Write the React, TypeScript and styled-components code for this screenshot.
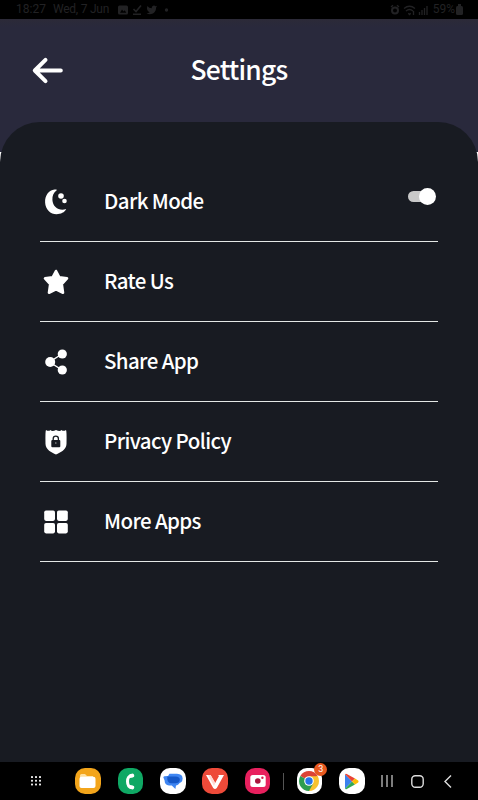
import React from "react";
import styled, { createGlobalStyle } from "styled-components";

const GlobalStyle = createGlobalStyle`
  * { box-sizing: border-box; }
  html, body { margin: 0; padding: 0; background: #fff; }
  svg { display: block; flex: none; overflow: visible; }
`;

const Screen = styled.div`
  width: 478px;
  height: 800px;
  overflow: hidden;
  display: flex;
  flex-direction: column;
  background: #fff;
  font-family: "Noto Sans CJK SC", "Noto Sans", sans-serif;
`;

const StatusBar = styled.div`
  height: 19px;
  flex: none;
  display: flex;
  align-items: center;
  justify-content: space-between;
  padding: 0 15px 0 16px;
  background: #000;
  color: #222224;
  font: 12px/19px Roboto, sans-serif;
`;

const StatusGroup = styled.div<{ $gap: number }>`
  display: flex;
  align-items: center;
  gap: ${(p) => p.$gap}px;
`;

const Clock = styled.span`
  width: 32px;
`;

const Day = styled.span`
  width: 59px;
  white-space: nowrap;
  letter-spacing: -0.25px;
`;

const Header = styled.header`
  height: 133px;
  flex: none;
  display: grid;
  grid-template-columns: 95px 1fr 95px;
  justify-items: center;
  padding-top: 29px;
  align-items: start;
  background: linear-gradient(#2c2a38, #29293c 8px);
`;

const BackButton = styled.button`
  border: 0;
  padding: 0;
  background: none;
  height: 44px;
  display: flex;
  align-items: center;
`;

const Title = styled.h1`
  margin: 0;
  color: #fff;
  font-size: 26.4px;
  line-height: 41px;
  font-weight: 500;
  letter-spacing: -0.75px;
`;

const Panel = styled.main`
  flex: 1;
  margin-top: -30px;
  padding: 40px 40px 0;
  border-radius: 40px 40px 0 0;
  background: #181b22;
`;

const Row = styled.div`
  height: 80px;
  display: flex;
  align-items: center;
  border-bottom: 1px solid #e4e8e6;
`;

const IconSlot = styled.div`
  width: 32px;
  display: flex;
  justify-content: center;
  margin: 0 32px 0 0;
`;

const Label = styled.span`
  flex: 1;
  padding-bottom: 4px;
  color: #fff;
  font-size: 20.5px;
  line-height: 30px;
  font-weight: 500;
  letter-spacing: -0.62px;
`;

const Track = styled.div`
  width: 25px;
  height: 11px;
  margin: 0 5.5px 10px 0;
  border-radius: 6px;
  background: #c9c9c9;
  display: flex;
  align-items: center;
  justify-content: flex-end;
`;

const Thumb = styled.div`
  width: 17px;
  height: 17px;
  flex: none;
  margin-right: -3px;
  border-radius: 50%;
  background: #fff;
`;

const NavBar = styled.nav`
  height: 38px;
  flex: none;
  display: grid;
  grid-template-columns: 61.6px repeat(5, 42.4px) 9.4px 42.6px 42.4px 28.2px 31.8px 29.6px;
  padding-left: 5.2px;
  align-items: center;
  justify-items: center;
  background: #000;
`;

const AppTile = styled.div<{ $bg: string }>`
  position: relative;
  width: 25.5px;
  height: 26px;
  border-radius: 10px;
  background: ${(p) => p.$bg};
  display: flex;
  align-items: center;
  justify-content: center;
`;

const Divider = styled.div`
  width: 1px;
  height: 17px;
  background: #555;
`;

const Badge = styled.span`
  position: absolute;
  top: -5px;
  right: -5px;
  width: 13px;
  height: 13px;
  border-radius: 50%;
  background: #e8591f;
  color: #fff;
  font: 9px/13px Roboto, sans-serif;
  text-align: center;
`;

const MoonIcon = () => (
  <svg width="24" height="26" viewBox="0 0 24 26" fill="#fff">
    <path d="M10.6 0.6C4.8 1.3 0.8 6.6 1.1 13.4C1.4 20.4 6.6 25.2 12.5 25.2C16.8 25.2 20.6 23.4 22.2 20C15.6 22.4 8.8 18.4 8.4 11C8.2 6.7 9.4 3.6 12.7 1.2C13.3.7 12.1.4 10.6.6Z" />
    <circle cx="17" cy="7" r="2.8" />
    <circle cx="20.5" cy="12" r="2.3" />
  </svg>
);

const StarIcon = () => (
  <svg width="26" height="26" viewBox="0 0 26 26" fill="#fff" stroke="#fff" strokeWidth="2.6" strokeLinejoin="round">
    <path d="M13 2L16.3 8.4L24 9.4L18.8 15.1L20 23.7L13 20.4L6 23.7L7.2 15.1L2 9.4L9.7 8.4Z" />
  </svg>
);

const ShareIcon = () => (
  <svg width="24" height="26" viewBox="0 0 24 26" fill="#fff">
    <path d="M18 5L5.5 13L18 21" fill="none" stroke="#fff" strokeWidth="1.4" />
    <circle cx="6.2" cy="13" r="5" />
    <circle cx="18.3" cy="5" r="4.6" />
    <circle cx="18.3" cy="21" r="4.6" />
  </svg>
);

const ShieldIcon = () => (
  <svg width="22" height="26" viewBox="0 0 22 26">
    <path d="M1 1Q3.5 2.7 5.5 1Q7 3 11 1Q15 3 16.5 1Q18.5 2.7 21 1Q21.8 2 21.5 15C21.3 20.5 15.5 23.8 11 25.4C6.5 23.8.7 20.5.5 15Q.2 2 1 1Z" fill="#fff" />
    <rect x="6.3" y="11" width="9" height="7.2" rx="1" fill="#181b22" />
    <path d="M8.2 11.5V9.8a2.6 2.6 0 0 1 5.2 0v1.7" fill="none" stroke="#181b22" strokeWidth="1.3" />
    <circle cx="10.8" cy="14" r="0.8" fill="#999" />
  </svg>
);

const AppsIcon = () => (
  <svg width="24" height="24" viewBox="0 0 24 24" fill="#fff">
    <rect x="0.2" y="0.5" width="10.8" height="10.4" rx="1.8" />
    <rect x="13" y="0.5" width="10.8" height="10.4" rx="1.8" />
    <rect x="0.2" y="13" width="10.8" height="10.4" rx="1.8" />
    <rect x="13" y="13" width="10.8" height="10.4" rx="1.8" />
  </svg>
);

const rows = [
  { label: "Dark Mode", Icon: MoonIcon, toggle: true },
  { label: "Rate Us", Icon: StarIcon },
  { label: "Share App", Icon: ShareIcon },
  { label: "Privacy Policy", Icon: ShieldIcon },
  { label: "More Apps", Icon: AppsIcon },
];

const Notifications = () => (
  <svg width="54" height="12" viewBox="0 0 54 12" fill="#222224">
    <rect x="1" y="1.5" width="10" height="9" rx="1.5" />
    <path d="M3 8.8L5 5.5L6.5 7.5L7.7 6.2L9.3 8.8Z" fill="#000" />
    <path d="M16.5 5L19 7.5L24 1.5M16 10.3h8" fill="none" stroke="#222224" strokeWidth="1.6" />
    <path transform="translate(29 .2) scale(.48)" d="M23 3a10.9 10.9 0 0 1-3.14 1.53 4.48 4.48 0 0 0-7.86 3v1A10.66 10.66 0 0 1 3 4s-4 9 5 13a11.64 11.64 0 0 1-7 2c9 5 20 0 20-11.5 0-.28-.03-.56-.08-.83A7.72 7.72 0 0 0 23 3z" />
    <circle cx="49.5" cy="6" r="1.7" />
  </svg>
);

const Signals = () => (
  <svg width="43" height="12" viewBox="0 0 43 12" fill="none" stroke="#222224" strokeWidth="1.3">
    <circle cx="6" cy="6.4" r="3" strokeWidth="2" />
    <path d="M2 3L4 1.2M10 3L8 1.2" />
    <path d="M15 4.5Q20.5 0 26 4.5M17 7Q20.5 4 24 7M19.3 9.3L20.5 10.5L21.7 9.3M24.5 7v4" />
    <path d="M30.5 11V8M33 11V6M35.5 11V4M38 11V2" />
  </svg>
);

const ChromeIcon = () => (
  <svg width="20" height="20" viewBox="0 0 20 20">
    <path d="M10 10L1.34 5A10 10 0 0 1 18.66 5Z" fill="#dc4435" />
    <path d="M10 10L18.66 5A10 10 0 0 1 10 20Z" fill="#f9c22e" />
    <path d="M10 10L10 20A10 10 0 0 1 1.34 5Z" fill="#2d9d50" />
    <path d="M10 5.2H18.7L14.2 12.4Z" fill="#f9c22e" />
    <path d="M14.2 12.4L10 20L5.8 12.4Z" fill="#2d9d50" />
    <circle cx="10" cy="10" r="4.8" fill="#fff" />
    <circle cx="10" cy="10" r="3.7" fill="#2674e8" />
  </svg>
);

export default function App() {
  return (
    <Screen>
      <GlobalStyle />
      <StatusBar>
        <StatusGroup $gap={5}>
          <Clock>18:27</Clock>
          <Day>Wed, 7 Jun</Day>
          <Notifications />
        </StatusGroup>
        <StatusGroup $gap={1}>
          <Signals />
          <span>59%</span>
          <svg width="7" height="11" viewBox="0 0 7 11" fill="#222224">
            <rect x="2" y="0" width="3" height="3" />
            <rect x="0" y="2" width="7" height="9" rx="1.5" />
          </svg>
        </StatusGroup>
      </StatusBar>
      <Header>
        <BackButton aria-label="Back">
          <svg width="31" height="27" viewBox="0 0 31 27" fill="none" stroke="#fff" strokeWidth="4" strokeLinecap="round" strokeLinejoin="round">
            <path d="M13.5 2.8L2.8 13.5L13.5 24.2M3.5 13.5H28.8" />
          </svg>
        </BackButton>
        <Title>Settings</Title>
      </Header>
      <Panel>
        {rows.map(({ label, Icon, toggle }) => (
          <Row key={label}>
            <IconSlot>
              <Icon />
            </IconSlot>
            <Label>{label}</Label>
            {toggle && (
              <Track>
                <Thumb />
              </Track>
            )}
          </Row>
        ))}
      </Panel>
      <NavBar>
        <svg width="12" height="10" viewBox="0 0 12 10" fill="#e8e8e8">
          {[1, 5, 9].map((x) =>
            [0, 3.7, 7.4].map((y) => <rect key={`${x}-${y}`} x={x} y={y} width="2" height="2" rx="0.6" />)
          )}
        </svg>
        <AppTile $bg="#f3a51b">
          <svg width="17" height="16" viewBox="0 0 17 16">
            <path d="M1 2.5Q1 1 2.5 1H6L8 3H14V8H1Z" fill="#ffe0a0" />
            <rect x="0.5" y="3.8" width="16" height="11.2" rx="2" fill="#fff" />
          </svg>
        </AppTile>
        <AppTile $bg="#0fa864">
          <svg width="11" height="17" viewBox="0 0 11 17" fill="none" stroke="#fff" strokeLinecap="round">
            <path d="M6.5 2.4C1.2 3.6 1.2 13.4 6.5 14.6" strokeWidth="3" />
            <path d="M6 2.9L7.3 2.6M6 14.1L7.3 14.4" strokeWidth="4" />
          </svg>
        </AppTile>
        <AppTile $bg="#fff">
          <svg width="20" height="17" viewBox="0 0 20 17">
            <path d="M6.5 0.8H14Q19.6 1 19.6 5.6T14.5 10.4H8Q3.5 9.8 3.5 5.5Z" fill="#3f86f2" />
            <path d="M4.5 3H12Q17 3.2 17 7.7Q16.7 12 13 12.4L12.4 16L8.8 12.6H6Q1.6 12 1.6 7.6L.3 4.2Q.4 3 4.5 3Z" fill="#3f86f2" />
            <path d="M4.4 3.4H12.4Q17 3.6 16.8 7Q16.2 10.3 12.5 10.3H8Q3.4 9.6 4.4 3.4Z" fill="#1558c8" />
          </svg>
        </AppTile>
        <AppTile $bg="#ee4a39">
          <svg width="20" height="17" viewBox="0 0 20 17">
            <path d="M1 2H5.6L10.2 10L14 3L13 2H19L11.8 15Q10 17 8.2 15Z" fill="#fff" />
            <path d="M3 2H5.6L10.2 10L9 13Z" fill="#ffd8d2" />
          </svg>
        </AppTile>
        <AppTile $bg="#e8205e">
          <svg width="16" height="14" viewBox="0 0 16 14">
            <rect x="0.3" y="1" width="15.4" height="12" rx="2.5" fill="#fff" />
            <circle cx="7.8" cy="7" r="2.8" fill="#a9163d" />
            <circle cx="12.4" cy="3.7" r="1.2" fill="#d61a50" />
          </svg>
        </AppTile>
        <Divider />
        <AppTile $bg="#fff">
          <ChromeIcon />
          <Badge>3</Badge>
        </AppTile>
        <AppTile $bg="#fff">
          <svg width="15" height="17" viewBox="0 0 15 17">
            <path d="M1 1.2V15.8L8 8.5Z" fill="#3b82ee" />
            <path d="M1 1.2Q1.6.4 2.8 1L11 5.6L8 8.5Z" fill="#e94335" />
            <path d="M1 15.8Q1.6 16.6 2.8 16L11 11.4L8 8.5Z" fill="#31a853" />
            <path d="M11 5.6L14.2 7.6Q15 8.5 14.2 9.4L11 11.4L8 8.5Z" fill="#fbbc04" />
          </svg>
        </AppTile>
        <svg width="12" height="12" viewBox="0 0 12 12" stroke="#d0d0d0" strokeWidth="1.2">
          <path d="M1 0V12M6 0V12M11 0V12" />
        </svg>
        <svg width="13" height="13" viewBox="0 0 13 13" fill="none" stroke="#ddd" strokeWidth="1.4">
          <rect x="0.8" y="0.8" width="11.4" height="11.4" rx="3.5" />
        </svg>
        <svg width="8" height="13" viewBox="0 0 8 13" fill="none" stroke="#ddd" strokeWidth="1.4">
          <path d="M7 0.5L1 6.5L7 12.5" />
        </svg>
      </NavBar>
    </Screen>
  );
}
